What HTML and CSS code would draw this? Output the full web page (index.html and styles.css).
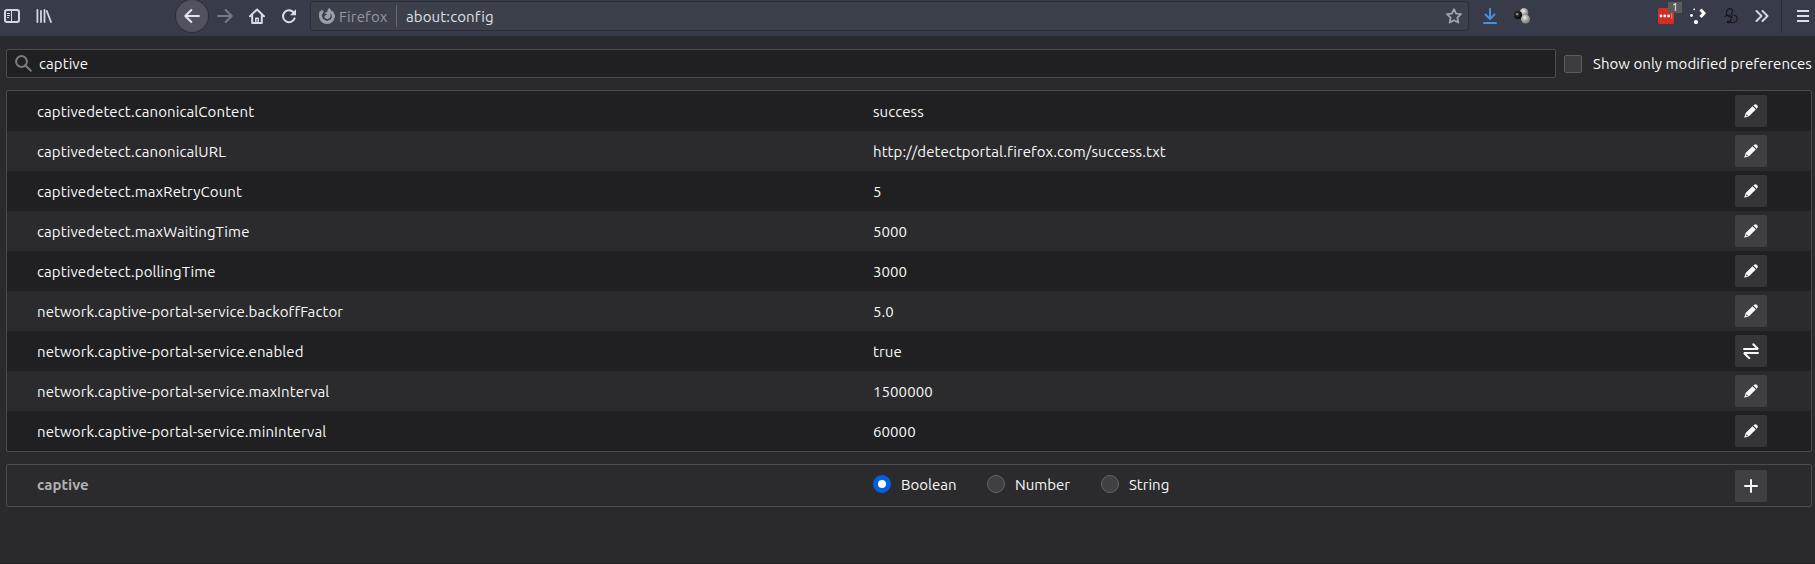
FILE: index.html
```
<!DOCTYPE html>
<html lang="en">
<head>
<meta charset="utf-8">
<title>about:config</title>
<link rel="stylesheet" href="styles.css">
</head>
<body>
<svg width="0" height="0" class="defs">
  <symbol id="pencil" viewBox="0 0 16 16"><path d="M9.500 3.200 L12.800 6.500 L6.500 12.800 Q5.900 13.300 5.200 13.500 L2 14.600 Q1 14.800 1.400 13.900 L2.400 10.700 Q2.600 10.200 3.100 9.600 Z M10.300 2.400 L11.600 1.500 Q12.700 .9 13.700 1.800 L14.400 2.600 Q15.300 3.600 14.600 4.600 L13.600 5.700 Z" fill="#f9f9fa"/><path d="M3.200 11.600l1.500 1.500" stroke="#555" stroke-width="1.100"/></symbol>
</svg>
<header class="toolbar">
  <svg class="ic sidebar" width="16" height="16" viewBox="0 0 16 16" fill="none" stroke="#d3d7e2"><rect x="1" y="2" width="14" height="12" rx="2" stroke-width="2"/><path d="M7.5 2v12" stroke-width="1"/><path d="M3 5.5h3M3 7.5h3M3 9.5h2" stroke-width="1"/></svg>
  <svg class="ic library" width="16" height="16" viewBox="0 0 16 16" fill="none" stroke="#d3d7e2" stroke-width="1.8" stroke-linecap="round"><path d="M1.4 2v12M5 3v11M8.5 2v12M10.8 3l4.2 11"/></svg>
  <div class="back"><svg width="16" height="16" viewBox="0 0 16 16" fill="none" stroke="#e3e5ec" stroke-width="2" stroke-linecap="round" stroke-linejoin="round"><path d="M15 8H1.8M7.3 2L1.3 8l6 6"/></svg></div>
  <svg class="ic forward" width="16" height="16" viewBox="0 0 16 16" fill="none" stroke="#757987" stroke-width="2" stroke-linecap="round" stroke-linejoin="round"><path d="M1 8h13.2M8.7 2l6 6-6 6"/></svg>
  <svg class="ic home" width="16" height="16" viewBox="0 0 16 16" fill="none" stroke="#d9dce6" stroke-width="2" stroke-linecap="round" stroke-linejoin="round"><path d="M1 8.2L8 1.5l7 6.7M3.2 7.5V15h9.6V7.5"/><path d="M6.8 14.5v-4.3h2.4v4.3" stroke-width="1.5"/></svg>
  <svg class="ic reload" width="16" height="16" viewBox="0 0 16 16" fill="none" stroke="#d9dce6" stroke-width="2" stroke-linecap="round"><path d="M13.6 10.4A6 6 0 1 1 12.3 4"/><path d="M15 1.3v6H9z" fill="#d9dce6" stroke="none"/></svg>
  <div class="urlbar">
    <svg class="fx" width="16" height="16" viewBox="0 0 16 16"><path d="M15.6 6.6C15.3 4.9 14.1 3.3 13 2.7l.3 1.5C12.500 2.300 11.300 1.700 10.500 0 8.900.9 8.300 2.500 8.400 3.700 6.900 3.800 6.200 4.600 5.700 5.300L7.900 6C7.900 6.800 6.600 7 6.400 7.300 6.300 8.300 5.200 8.500 5.200 8.500 5.500 10.300 7.500 11.400 9.500 10.700 11.700 10 12.300 7.300 10.700 5.300 13.300 6.400 13.500 9.700 11.500 11.500L8 13 4 11 2.700 7.500 4.800 3.200C3.900 3.100 3.200 2.300 3 1.500 2.300 2.200 1.900 2.900 1.900 3.600L1 2.700C.2 4.500 0 6.300 0 8a8 8 0 0 0 16 0Z" fill="#9a9eac"/></svg>
    <span class="brand">Firefox</span>
    <span class="sep"></span>
    <span class="url">about:config</span>
    <svg class="star" width="16" height="16" viewBox="0 0 16 16" fill="none" stroke="#a0a4b1" stroke-width="1.8" stroke-linejoin="round"><path d="M8 1.2l2.100 4.400 4.900.6-3.600 3.400.9 4.900L8 12.200l-4.300 2.300.9-4.900L1 6.200l4.900-.6z"/></svg>
  </div>
  <svg class="ic download" width="14" height="16" viewBox="0 0 14 16" fill="none" stroke="#4a90e2" stroke-width="2" stroke-linecap="round" stroke-linejoin="round"><path d="M7 1v9.500M2.500 6.500L7 11l4.500-4.500M1 15h12"/></svg>
  <svg class="ic balls" width="16" height="16" viewBox="0 0 16 16"><defs><radialGradient id="lt" cx=".4" cy=".35"><stop offset="0" stop-color="#eee"/><stop offset="1" stop-color="#8c8c8c"/></radialGradient><radialGradient id="dk" cx=".4" cy=".4"><stop offset="0" stop-color="#ddd"/><stop offset=".35" stop-color="#333"/><stop offset="1" stop-color="#080808"/></radialGradient></defs><circle cx="10" cy="4.300" r="4.200" fill="url(#lt)"/><circle cx="4" cy="7" r="4" fill="url(#dk)"/><circle cx="11.500" cy="11" r="4.500" fill="url(#lt)"/></svg>
  <div class="ext"><svg width="16" height="16" viewBox="0 0 16 16"><rect width="16" height="16" rx="1.500" fill="#d32d27"/><g fill="#fff"><circle cx="3" cy="8" r="1.400"/><circle cx="6.800" cy="8" r="1.400"/><circle cx="10.600" cy="8" r="1.400"/></g><path d="M13.200 5h1v6h-1z" fill="#f08a86"/></svg><span class="badge">1</span></div>
  <svg class="ic dots" width="16" height="16" viewBox="0 0 16 16"><g fill="#fff"><circle cx="4.200" cy="1.300" r=".9"/><circle cx="1.500" cy="7.500" r="1.400"/><circle cx="6" cy="14" r="2.100"/></g><path d="M10.500 1.500l3.500 3.800-3.500 3.800" fill="none" stroke="#fff" stroke-width="3"/></svg>
  <svg class="ic monogram" width="14" height="16" viewBox="0 0 14 16" fill="none" stroke="#17181c" stroke-width="1.100"><ellipse cx="5.400" cy="4" rx="2.700" ry="3.700" transform="rotate(25 5.400 4)"/><path d="M.5 9Q2.500 6.500 4.500 8t3.500.5M8.500 6.500L6 14q-1.500 1.500-2.500.3t2-.8l2.500 1.300q5-.3 5.200-4.300Q13.200 7 9.500 7.500"/></svg>
  <svg class="ic chevrons" width="14" height="14" viewBox="0 0 14 14" fill="none" stroke="#d3d7e2" stroke-width="2" stroke-linecap="round" stroke-linejoin="round"><path d="M1.500 2l5 5-5 5M7.500 2l5 5-5 5"/></svg>
  <span class="bar"></span>
  <svg class="ic menu" width="12" height="12" viewBox="0 0 12 12" stroke="#dcdfe9" stroke-width="2"><path d="M0 1h12M0 6h12M0 11h12"/></svg>
</header>
<main>
  <div class="searchrow">
    <div class="search"><svg width="17" height="17" viewBox="0 0 17 17" fill="none" stroke="#7b7b7d" stroke-width="2"><circle cx="6.500" cy="6.500" r="5.400"/><path d="M10.500 10.500l5.300 5.300" stroke-linecap="round"/></svg><span class="q">captive</span></div>
    <span class="check"></span><span class="only">Show only modified preferences</span>
  </div>
  <div class="prefs">
    <div class="row"><span class="name">captivedetect.canonicalContent</span><span class="val">success</span><span class="btn"><svg width="16" height="16"><use href="#pencil"/></svg></span></div>
    <div class="row"><span class="name">captivedetect.canonicalURL</span><span class="val">http://detectportal.firefox.com/success.txt</span><span class="btn"><svg width="16" height="16"><use href="#pencil"/></svg></span></div>
    <div class="row"><span class="name">captivedetect.maxRetryCount</span><span class="val">5</span><span class="btn"><svg width="16" height="16"><use href="#pencil"/></svg></span></div>
    <div class="row"><span class="name">captivedetect.maxWaitingTime</span><span class="val">5000</span><span class="btn"><svg width="16" height="16"><use href="#pencil"/></svg></span></div>
    <div class="row"><span class="name">captivedetect.pollingTime</span><span class="val">3000</span><span class="btn"><svg width="16" height="16"><use href="#pencil"/></svg></span></div>
    <div class="row"><span class="name">network.captive-portal-service.backoffFactor</span><span class="val">5.0</span><span class="btn"><svg width="16" height="16"><use href="#pencil"/></svg></span></div>
    <div class="row"><span class="name">network.captive-portal-service.enabled</span><span class="val">true</span><span class="btn"><svg width="16" height="16" viewBox="0 0 16 16" fill="none" stroke="#f9f9fa" stroke-width="2" stroke-linecap="round"><path d="M1 6h14L10.300 1.200M15 10H1l5.300 5.200" stroke-linejoin="bevel"/></svg></span></div>
    <div class="row"><span class="name">network.captive-portal-service.maxInterval</span><span class="val">1500000</span><span class="btn"><svg width="16" height="16"><use href="#pencil"/></svg></span></div>
    <div class="row"><span class="name">network.captive-portal-service.minInterval</span><span class="val">60000</span><span class="btn"><svg width="16" height="16"><use href="#pencil"/></svg></span></div>
  </div>
  <div class="add">
    <span class="name new">captive</span>
    <div class="radios"><span class="opt"><i class="radio on"></i>Boolean</span><span class="opt"><i class="radio"></i>Number</span><span class="opt"><i class="radio"></i>String</span></div>
    <span class="btn"><svg width="16" height="16" viewBox="0 0 16 16" stroke="#f9f9fa" stroke-width="2" stroke-linecap="round"><path d="M8 2v12M2 8h12"/></svg></span>
  </div>
</main>
</body>
</html>
```
FILE: styles.css
```
* { box-sizing: border-box; }
html, body { margin: 0; height: 564px; overflow: hidden; }
body {
  background: #2a2a2e;
  color: #f9f9fa;
  font: 15px/20px Ubuntu, "Noto Sans", sans-serif;
  letter-spacing: 0.08px;
  border-bottom: 1px solid #211f24;
}
.defs { display: block; position: absolute; }
svg { display: block; flex: none; }
span { white-space: nowrap; }

.toolbar { display: flex; align-items: flex-start; height: 36px; background: #383b4a; padding-left: 4px; }
.ic { margin-top: 8px; }
.library { margin-left: 16px; }
.back { width: 32px; height: 32px; margin-left: 124px; border-radius: 50%; background: #50535f; box-shadow: 0 0 0 1px #2d2f3b; display: flex; align-items: center; justify-content: center; }
.forward { margin-left: 9px; }
.home, .reload { margin-left: 16px; }
.urlbar { width: 1159px; height: 30px; margin: 1px 0 0 13px; border: 1px solid #2b2d37; border-radius: 4px; background: #3c404b; display: flex; align-items: center; padding: 0 6px 0 8px; }
.brand { margin-left: 4px; width: 49px; padding-top: 1px; color: #9598a4; letter-spacing: 0.14px; }
.sep { width: 1px; height: 22px; margin: 0 9px 0 8px; background: #666a76; }
.url { padding-top: 1px; color: #dfe1e8; letter-spacing: 0.12px; }
.star { margin-left: auto; }
.download { margin-left: 14px; }
.balls { margin-left: 17px; }
.ext { position: relative; margin: 8px 0 0 128px; }
.badge { position: absolute; left: 10px; top: -6px; width: 14px; height: 11px; background: #5b5b5b; font-size: 10.5px; line-height: 11px; text-align: center; letter-spacing: 0; }
.dots { margin-left: 16px; }
.monogram { margin-left: 18px; }
.chevrons { margin: 9px 0 0 17px; }
.bar { width: 1px; height: 33px; margin-left: 12px; background: #282b37; }
.menu { margin: 10px 0 0 15px; }

main { padding: 13px 3px 0 6px; }
.searchrow { display: flex; align-items: center; height: 29px; }
.search { flex: none; width: 1550px; height: 29px; border: 1px solid #4c4c4e; border-radius: 2px; background: #202022; display: flex; align-items: center; padding-left: 8px; }
.q { margin-left: 7px; }
.only { letter-spacing: 0.04px; }
.check { flex: none; width: 18px; height: 18px; margin: 1px 11px 0 8px; border: 1px solid #5b5b60; border-radius: 2px; background: #3c3c41; }
.prefs { margin-top: 12px; border: 1px solid #4c4c4e; border-radius: 2px; background: #202022; }
.row { display: flex; align-items: center; height: 40px; padding-left: 30px; }
.row:nth-child(even) { background: #2b2b2d; }
.name { width: 836px; letter-spacing: 0.095px; }
.row .name, .row .val { padding-top: 2px; }
.btn { width: 32px; height: 32px; margin: 0 44px 0 auto; border-radius: 2px; background: #363638; display: flex; align-items: center; justify-content: center; }
.row:nth-child(even) .btn, .add .btn { background: #404042; }
.add { margin-top: 12px; height: 43px; border: 1px solid #4c4c4e; border-radius: 2px; background: #2b2b2d; display: flex; align-items: center; padding-left: 30px; }
.new { font-weight: bold; color: #b0b0b2; padding-bottom: 2px; }
.radios { display: flex; padding-bottom: 2px; letter-spacing: 0; }
.opt { display: flex; align-items: center; width: 114px; }
.radio { width: 18px; height: 18px; margin: -1px 10px 1px 0; border: 1px solid #656568; border-radius: 50%; background: #404042; }
.on { border: 5px solid #0060df; background: #fff; }
```
